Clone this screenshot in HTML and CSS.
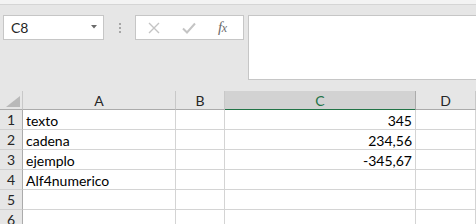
FILE: index.html
```html
<!DOCTYPE html>
<html>
<head>
<meta charset="utf-8">
<link rel="stylesheet" href="styles.css">
</head>
<body>
<div class="ribbon-edge"></div>
<div class="toolbar">
  <div class="namebox">
    <span class="name">C8</span>
    <svg class="caret" width="6" height="4" viewBox="0 0 6 4"><path d="M0 0H6L3 3.5Z" fill="#6a6a6a"/></svg>
  </div>
  <div class="grip"><i></i><i></i><i></i></div>
  <div class="fxbox">
    <svg class="btn" width="12" height="12" viewBox="0 0 12 12"><path d="M1 1L11 11M11 1L1 11" stroke="#c4c4c4" stroke-width="1.4"/></svg>
    <svg class="btn" width="14" height="12" viewBox="0 0 14 12"><path d="M1 6.5L5 10.5L13 1.5" stroke="#c4c4c4" stroke-width="2" fill="none"/></svg>
    <span class="fx">f<span class="x">x</span></span>
  </div>
  <div class="formula"></div>
</div>
<div class="sheet">
  <div class="corner"><svg width="14" height="11" viewBox="0 0 14 11"><path d="M14 0V11H0Z" fill="#b9b9b9"/></svg></div>
  <div class="colh">A</div>
  <div class="colh">B</div>
  <div class="colh sel">C</div>
  <div class="colh">D</div>

  <div class="rowh">1</div><div class="cell">texto</div><div class="cell"></div><div class="cell num">345</div><div class="cell"></div>
  <div class="rowh">2</div><div class="cell">cadena</div><div class="cell"></div><div class="cell num">234,56</div><div class="cell"></div>
  <div class="rowh">3</div><div class="cell">ejemplo</div><div class="cell"></div><div class="cell num">-345,67</div><div class="cell"></div>
  <div class="rowh">4</div><div class="cell">Alf4numerico</div><div class="cell"></div><div class="cell num"></div><div class="cell"></div>
  <div class="rowh">5</div><div class="cell"></div><div class="cell"></div><div class="cell"></div><div class="cell"></div>
  <div class="rowh">6</div><div class="cell"></div><div class="cell"></div><div class="cell"></div><div class="cell"></div>
</div>
</body>
</html>
```
FILE: styles.css
```css
html, body {
  margin: 0;
  padding: 0;
  background: #e6e6e6;
  overflow: hidden;
  height: 224px;
}
body {
  font-family: Lato, "Liberation Sans", sans-serif;
  font-size: 14px;
  color: #000;
}
.ribbon-edge {
  height: 4px;
  background: #f3f3f3;
  border-bottom: 1px solid #d5d5d5;
}
.toolbar {
  display: flex;
  align-items: flex-start;
  padding: 10px 0 0 3px;
  height: 76px;
}
.namebox {
  height: 23px;
  width: 86px;
  background: #fff;
  border: 1px solid #c6c6c6;
  display: flex;
  align-items: center;
  justify-content: space-between;
  padding: 0 6px 0 7px;
  box-sizing: content-box;
}
.name {
  font-size: 14px;
  color: #262626;
}
.caret { margin-top: -1px; }
.grip {
  margin: 8px 14px 0 15px;
  display: flex;
  flex-direction: column;
  gap: 2px;
}
.grip i {
  display: block;
  width: 2px;
  height: 2px;
  background: #a6a6a6;
}
.fxbox {
  height: 23px;
  width: 95px;
  background: #fff;
  border: 1px solid #c6c6c6;
  display: flex;
  align-items: center;
  padding-left: 12px;
  box-sizing: content-box;
}
.fxbox .btn:first-child { margin-right: 22px; }
.fxbox .btn:nth-child(2) { margin-right: 22px; }
.fx {
  font-family: "Liberation Serif", serif;
  font-style: italic;
  font-size: 15px;
  color: #6b6b6b;
  letter-spacing: -0.5px;
}
.fx .x { font-size: 12px; }
.formula {
  flex: 1;
  margin-left: 4px;
  height: 63px;
  background: #fff;
  border: 1px solid #c6c6c6;
  margin-right: -2px;
}
.sheet {
  display: grid;
  grid-template-columns: 23px 153px 49px 191px 1fr;
  grid-auto-rows: 20px;
  grid-template-rows: 19px;
}
.corner {
  background: #e6e6e6;
  border-right: 1px solid #c8c8c8;
  border-bottom: 1px solid #ababab;
  display: flex;
  align-items: flex-end;
  justify-content: flex-end;
  padding: 0 2px 2px 0;
}
.colh {
  background: #e6e6e6;
  border-right: 1px solid #c8c8c8;
  border-bottom: 1px solid #ababab;
  text-align: center;
  line-height: 19px;
  color: #262626;
}
.colh.sel {
  background: #d2d2d2;
  color: #217346;
  border-right-color: #ababab;
  border-bottom: 2px solid #217346;
  margin-bottom: -1px;
}
.rowh {
  background: #e6e6e6;
  border-right: 1px solid #ababab;
  border-bottom: 1px solid #d0d0d0;
  text-align: center;
  line-height: 20px;
  color: #262626;
}
.cell {
  background: #fff;
  border-right: 1px solid #d4d4d4;
  border-bottom: 1px solid #d4d4d4;
  line-height: 22px;
  padding: 0 3px;
  white-space: nowrap;
  overflow: visible;
}
.cell.num { text-align: right; }
```
